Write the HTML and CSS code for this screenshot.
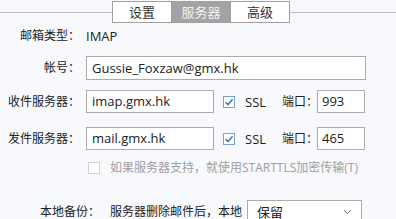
FILE: index.html
```
<!DOCTYPE html>
<html lang="zh-CN">
<head>
  <meta charset="UTF-8" />
  <title>账户设置 - 服务器</title>
  <link rel="stylesheet" href="styles.css">
</head>
<body>

  <div class="tabbar">
    <div class="tabline"></div>
    <div class="tabs">
      <div class="tab">设置</div>
      <div class="tab active">服务器</div>
      <div class="tab">高级</div>
    </div>
    <div class="tabline"></div>
  </div>

  <div class="form">
    <div class="row row-type">
      <label class="lbl">邮箱类型：</label>
      <span class="value">IMAP</span>
    </div>

    <div class="row row-account">
      <label class="lbl">帐号：</label>
      <div class="input wide">Gussie_Foxzaw@gmx.hk</div>
    </div>

    <div class="row row-in">
      <label class="lbl">收件服务器：</label>
      <div class="input host">imap.gmx.hk</div>
      <span class="check on">
        <svg width="10" height="10" viewBox="0 0 10 10"><path d="M1.5 5.2 L4 7.6 L8.6 2.2" fill="none" stroke="#3f78b8" stroke-width="1.5"/></svg>
      </span>
      <span class="ssl">SSL</span>
      <span class="port-lbl">端口：</span>
      <div class="input port">993</div>
    </div>

    <div class="row row-out">
      <label class="lbl">发件服务器：</label>
      <div class="input host">mail.gmx.hk</div>
      <span class="check on">
        <svg width="10" height="10" viewBox="0 0 10 10"><path d="M1.5 5.2 L4 7.6 L8.6 2.2" fill="none" stroke="#3f78b8" stroke-width="1.5"/></svg>
      </span>
      <span class="ssl">SSL</span>
      <span class="port-lbl">端口：</span>
      <div class="input port">465</div>
    </div>

    <div class="row row-tls">
      <span class="check off"></span>
      <span class="tls-text">如果服务器支持，就使用STARTTLS加密传输(T)</span>
    </div>

    <div class="row row-backup">
      <label class="lbl backup-lbl">本地备份：</label>
      <span class="backup-text">服务器删除邮件后，本地</span>
      <div class="select">
        <span>保留</span>
        <svg width="9" height="6" viewBox="0 0 9 6"><path d="M1 1 L4.5 4.5 L8 1" fill="none" stroke="#777" stroke-width="1"/></svg>
      </div>
    </div>
  </div>

</body>
</html>
```

FILE: styles.css
```
* { box-sizing: border-box; }
body {
  margin: 0;
  background: #f7f9fd;
  font-family: 'Open Sans', 'Noto Sans CJK SC', sans-serif;
  font-size: 12px;
  line-height: 16px;
  color: #222;
  overflow: hidden;
  height: 219px;
}

.tabbar {
  display: flex;
  align-items: center;
  padding-top: 1px;
}

.tabline {
  flex: 1;
  border-top: 1px solid #bcbcbc;
}

.tabline:first-child { flex: 0 0 112px; }

.tabs {
  display: flex;
}

.tab {
  width: 60px;
  height: 22px;
  line-height: 20px;
  text-align: center;
  font-size: 13px;
  background: #fff;
  border: 1px solid #a0a0a0;
  color: #333;
}

.tab + .tab { border-left: none; width: 59px; }

.tab.active {
  background: #a3a3a3;
  color: #f2f2f2;
}

.row {
  display: flex;
  align-items: center;
  white-space: nowrap;
}

.lbl {
  width: 86px;
  padding-right: 6px;
  text-align: right;
}

.value { font-size: 13px; }

.row-type { height: 18px; margin-top: 4px; }
.row-account { margin-top: 11px; }
.row-in { margin-top: 10px; }
.row-out { margin-top: 14px; }
.row-tls { margin-top: 11px; padding-left: 88px; height: 14px; }
.row-backup { margin-top: 25px; align-items: flex-start; }

.input {
  height: 23px;
  line-height: 21px;
  padding: 0 5px;
  background: #fff;
  border: 1px solid #ababab;
  font-size: 13px;
}

.row-account .input { height: 24px; line-height: 22px; }

.wide { width: 280px; }
.host { width: 128px; }
.port { width: 48px; padding-left: 4px; }

.check {
  width: 12px;
  height: 12px;
  border: 1px solid #7aa3d2;
  background: #fff;
  display: inline-flex;
  align-items: center;
  justify-content: center;
}

.row-in .check, .row-out .check { margin-left: 9px; }
.check.off { border-color: #d2d2d2; }

.ssl {
  margin-left: 10px;
  width: 37px;
  font-size: 13px;
}

.port-lbl { width: 35px; }

.tls-text {
  margin-left: 10px;
  color: #a0a0a0;
}

.backup-lbl,
.backup-text { margin-top: 4px; }

.backup-lbl { width: 110px; padding-right: 10px; }

.backup-text { width: 137px; }

.select {
  width: 115px;
  height: 24px;
  padding: 0 9px;
  background: #fff;
  border: 1px solid #ababab;
  display: flex;
  align-items: center;
  justify-content: space-between;
  font-size: 13px;
}
```
